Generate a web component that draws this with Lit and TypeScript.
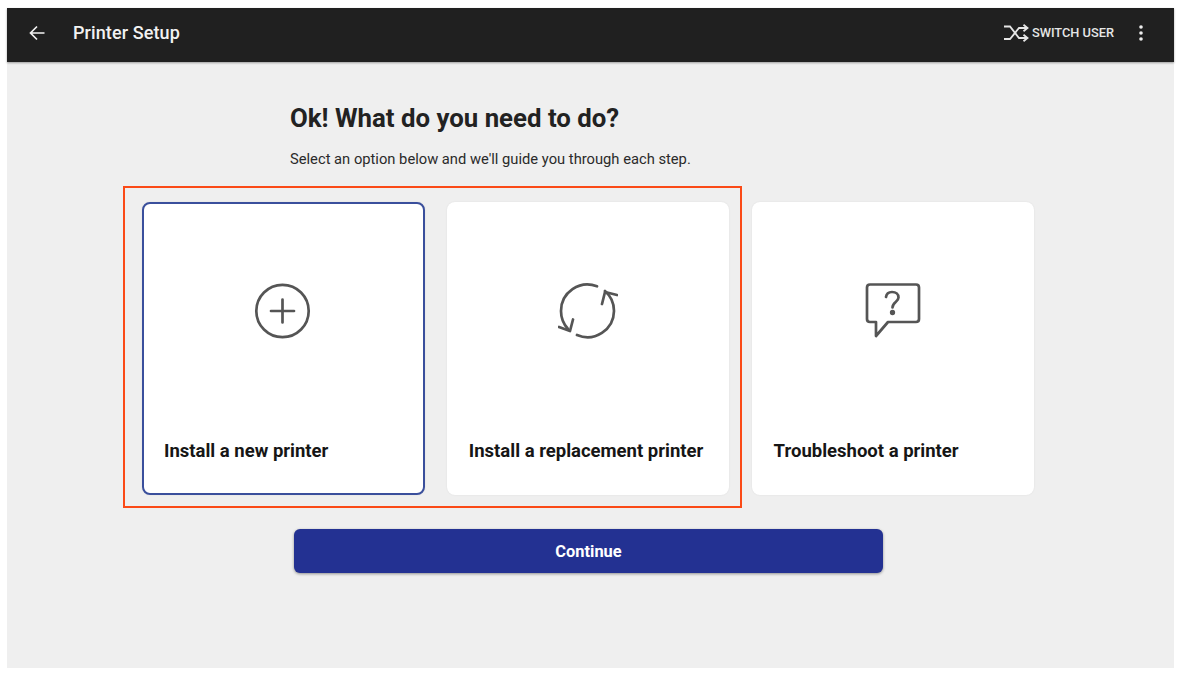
import { LitElement, html, css } from "lit";
import { customElement } from "lit/decorators.js";

const plus = html`<svg width="60" height="60" viewBox="0 0 60 60" fill="none" stroke="#555" stroke-width="2.700" stroke-linecap="round"><circle cx="29.500" cy="30" r="26.200"/><path d="M29.500 18.500v23M18 30h23"/></svg>`;
const refresh = html`<svg width="60" height="60" viewBox="0 0 60 60" fill="none" stroke="#555" stroke-width="2.700" stroke-linecap="round" stroke-linejoin="round"><path d="M39 5.300A26.500 26.500 0 0 0 3 30A26.500 26.500 0 0 0 10 48"/><path d="M1 46 12 50 15 38.500"/><path d="M19 54A26.500 26.500 0 0 0 56 30A26.500 26.500 0 0 0 47 10"/><path d="M59 14 47 11 44 23"/></svg>`;
const help = html`<svg width="60" height="60" viewBox="0 0 60 60" fill="none" stroke="#555" stroke-width="2.700" stroke-linecap="round" stroke-linejoin="round"><path d="M7 3.500H53Q56 3.500 56 6.500V38Q56 41 53 41H25L13 55V41H7Q4 41 4 38V6.500Q4 3.500 7 3.500Z"/><path d="M23 16C23.500 12.500 26 11 29 11C33 11 35.500 13.500 35.500 16.500C35.500 21 29.500 21 29.500 26.500"/><circle cx="29.500" cy="31.500" r="1.300" fill="#555"/></svg>`;

@customElement("app-root")
export class AppRoot extends LitElement {
  static styles = css`
    :host {
      display: block;
      width: 1186px;
      height: 677px;
      box-sizing: border-box;
      padding: 8px 12px 9px 7px;
      background: #fff;
      font-family: Roboto, "Liberation Sans", sans-serif;
      color: #222;
    }
    .frame {
      height: 100%;
      background: #efefef;
      display: flex;
      flex-direction: column;
    }
    .bar {
      height: 54px;
      box-sizing: border-box;
      flex: none;
      background: #202020;
      color: #f2f2f2;
      display: flex;
      align-items: center;
      box-shadow: 0 1px 2px rgba(0, 0, 0, 0.35);
      padding: 0 31px 5px 22px;
    }
    .back { display: block; margin-right: 28px; }
    .title { font-size: 18px; font-weight: 500; flex: 1; letter-spacing: 0.1px; }
    .switch {
      display: flex;
      align-items: center;
      gap: 3px;
      font-size: 12.800px;
      font-weight: 500;
      color: #e6e6e6;
      margin-right: 25px;
    }
    .dots { display: block; }
    .content {
      flex: 1;
      display: flex;
      flex-direction: column;
      padding-left: 135px;
    }
    h1 {
      margin: 40px 0 0 148px;
      font-size: 25.800px;
      line-height: 33px;
      font-weight: 700;
      color: #222;
    }
    .sub {
      margin: 15px 0 0 148px;
      font-size: 14.730px;
      line-height: 18px;
      color: #2a2a2a;
    }
    .cards {
      position: relative;
      display: flex;
      gap: 22.300px;
      margin-top: 34px;
    }
    .card {
      width: 282.500px;
      height: 293px;
      box-sizing: border-box;
      background: #fff;
      border-radius: 8px;
      display: flex;
      flex-direction: column;
      align-items: center;
      padding: 79px 22px 0;
      box-shadow: 0 0 2px rgba(0, 0, 0, 0.08);
    }
    .card.sel { border: 2px solid #3a4f9c; padding: 77px 20px 0; }
    .label {
      margin-top: 98px;
      align-self: stretch;
      font-size: 18.500px;
      line-height: 24px;
      font-weight: 700;
      color: #161616;
    }
    .mark {
      position: absolute;
      left: -19px;
      top: -16px;
      width: 619px;
      height: 322px;
      box-sizing: border-box;
      border: 2px solid #fb4a17;
      pointer-events: none;
    }
    .continue {
      align-self: flex-start;
      margin: 34px 0 0 152px;
      width: 589px;
      height: 44px;
      border: 0;
      border-radius: 6px;
      background: #233192;
      color: #fff;
      font: 700 16.400px Roboto, "Liberation Sans", sans-serif;
      box-shadow: 0 1px 3px rgba(0, 0, 0, 0.4);
    }
  `;

  render() {
    return html`<div class="frame">
      <header class="bar">
        <svg class="back" width="16" height="16" viewBox="0 0 16 16" fill="none" stroke="#f2f2f2" stroke-width="1.700"><path d="M15.500 8H1.500M8 1.500 1.500 8 8 14.500"/></svg>
        <span class="title">Printer Setup</span>
        <span class="switch">
          <svg width="26" height="18" viewBox="0 0 26 18" fill="none" stroke="#e6e6e6" stroke-width="1.800"><path d="M1 2.500H7L16 14H24M1 15H7L16 4H24"/><path d="M20.500 .8 24.500 4 20.500 7.200M20.500 10.800 24.500 14 20.500 17.200"/></svg>
          SWITCH USER
        </span>
        <svg class="dots" width="4" height="16" viewBox="0 0 4 16" fill="#eee"><circle cx="2" cy="2" r="1.800"/><circle cx="2" cy="8" r="1.800"/><circle cx="2" cy="14" r="1.800"/></svg>
      </header>
      <main class="content">
        <h1>Ok! What do you need to do?</h1>
        <p class="sub">Select an option below and we'll guide you through each step.</p>
        <div class="cards">
          <div class="card sel">${plus}<div class="label">Install a new printer</div></div>
          <div class="card">${refresh}<div class="label">Install a replacement printer</div></div>
          <div class="card">${help}<div class="label">Troubleshoot a printer</div></div>
          <div class="mark"></div>
        </div>
        <button class="continue">Continue</button>
      </main>
    </div>`;
  }
}
